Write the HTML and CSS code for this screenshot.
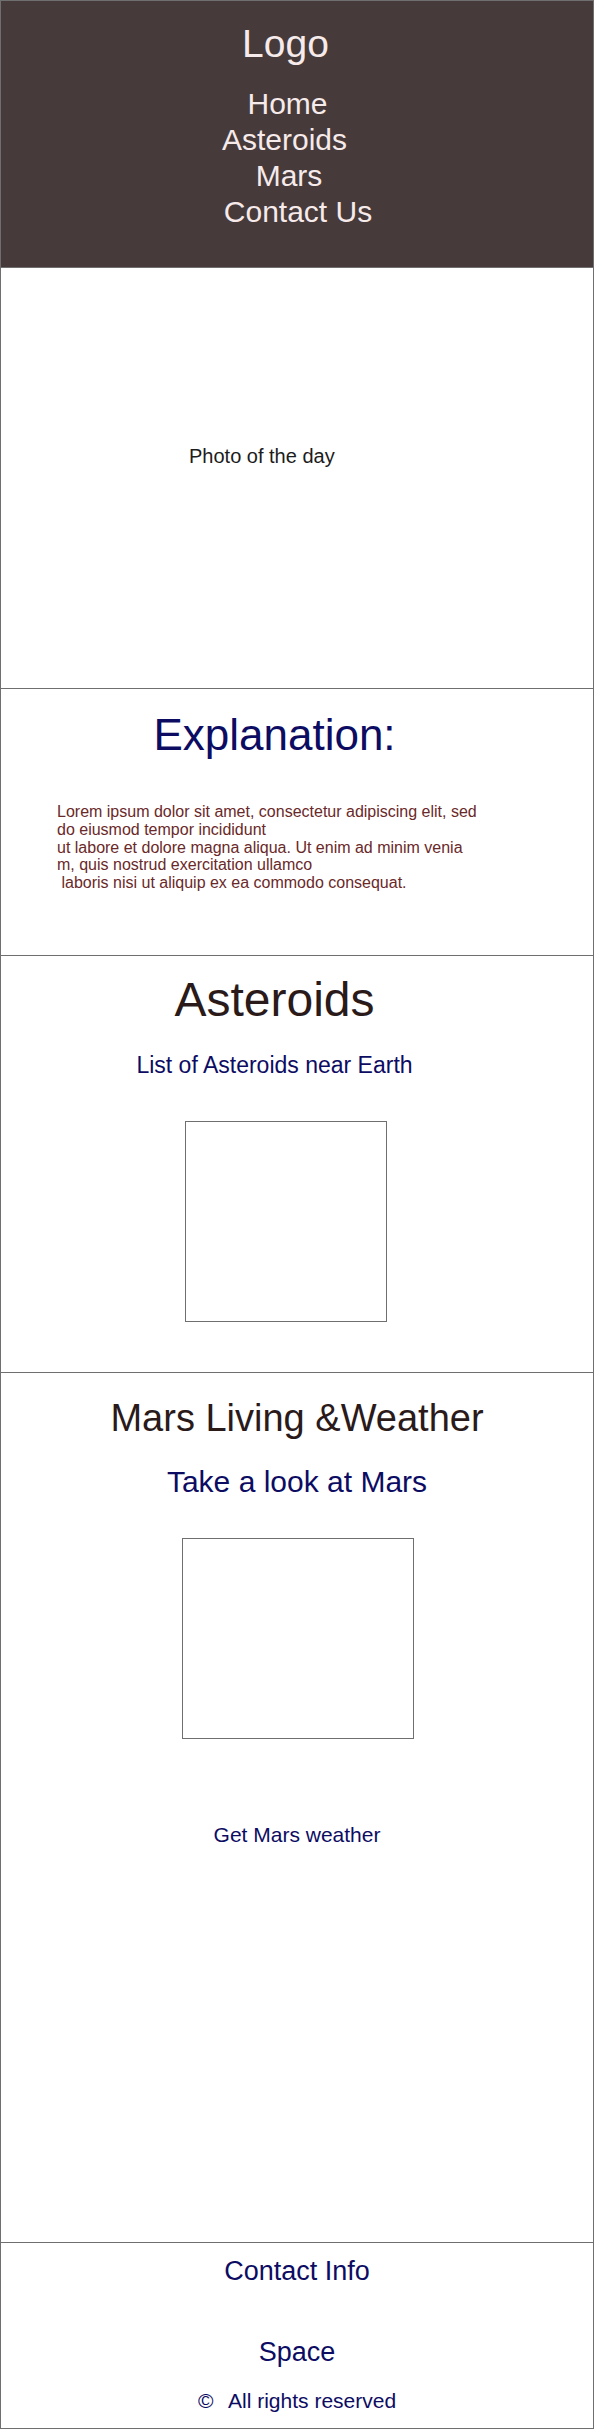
FILE: index.html
```html
<!DOCTYPE html>
<html lang="en">
<head>
<meta charset="utf-8">
<title>Space</title>
<link rel="stylesheet" href="styles.css">
</head>
<body>
<div class="page">
  <header class="site-header">
    <div class="logo">Logo</div>
    <nav class="nav">
      <a class="nav-link nav-home" href="#">Home</a>
      <a class="nav-link nav-asteroids" href="#">Asteroids</a>
      <a class="nav-link nav-mars" href="#">Mars</a>
      <a class="nav-link nav-contact" href="#">Contact Us</a>
    </nav>
  </header>

  <section class="photo">
    <p class="photo-label">Photo of the day</p>
  </section>

  <section class="explanation">
    <h2 class="explanation-title">Explanation:</h2>
    <p class="explanation-text">Lorem ipsum dolor sit amet, consectetur adipiscing elit, sed<br>do eiusmod tempor incididunt<br>ut labore et dolore magna aliqua. Ut enim ad minim venia<br>m, quis nostrud exercitation ullamco<br>&nbsp;laboris nisi ut aliquip ex ea commodo consequat.</p>
  </section>

  <section class="asteroids">
    <h2 class="asteroids-title">Asteroids</h2>
    <p class="asteroids-sub">List of Asteroids near Earth</p>
    <div class="asteroids-box"></div>
  </section>

  <section class="mars">
    <h2 class="mars-title">Mars Living &amp;Weather</h2>
    <p class="mars-sub">Take a look at Mars</p>
    <div class="mars-box"></div>
    <p class="mars-weather">Get Mars weather</p>
  </section>

  <footer class="site-footer">
    <p class="footer-contact">Contact Info</p>
    <p class="footer-space">Space</p>
    <p class="footer-rights"><span class="copy">&copy;</span> All rights reserved</p>
  </footer>
</div>
</body>
</html>
```

FILE: styles.css
```css
* {
  box-sizing: border-box;
}

html, body {
  margin: 0;
  padding: 0;
  background: #ffffff;
}

body {
  font-family: "Liberation Sans", Arial, Helvetica, sans-serif;
}

p, h2 {
  margin: 0;
  font-weight: normal;
}

.page {
  width: 594px;
  border: 1px solid #6f6f6f;
  display: flex;
  flex-direction: column;
}

/* Header */
.site-header {
  background: #463a3a;
  border-bottom: 1px solid #6f6f6f;
  height: 267px;
  padding-top: 19px;
  display: flex;
  flex-direction: column;
  align-items: center;
}

.logo {
  color: #f6eaea;
  font-size: 39px;
  line-height: 48px;
  margin-right: 23px;
}

.nav {
  margin-top: 18px;
  display: flex;
  flex-direction: column;
  align-items: center;
}

.nav-link {
  color: #f6eaea;
  text-decoration: none;
  font-size: 30px;
  line-height: 36px;
}

.nav-home { margin-right: 19px; }
.nav-asteroids { margin-right: 25px; }
.nav-mars { margin-right: 16px; }
.nav-contact { margin-left: 2px; }

/* Photo */
.photo {
  height: 421px;
  border-bottom: 1px solid #6f6f6f;
  padding-top: 176px;
  padding-left: 188px;
}

.photo-label {
  color: #1c1c1c;
  font-size: 20px;
  line-height: 24px;
}

/* Explanation */
.explanation {
  height: 267px;
  border-bottom: 1px solid #6f6f6f;
  padding-top: 20px;
}

.explanation-title {
  color: #0d0c63;
  font-size: 44px;
  line-height: 52px;
  text-align: center;
  padding-right: 45px;
}

.explanation-text {
  margin-top: 42px;
  padding-left: 56px;
  color: #6a2929;
  font-size: 16px;
  line-height: 17.8px;
}

/* Asteroids */
.asteroids {
  height: 417px;
  border-bottom: 1px solid #6f6f6f;
  padding-top: 16px;
  padding-right: 45px;
  display: flex;
  flex-direction: column;
  align-items: center;
}

.asteroids-title {
  color: #2a1a1a;
  font-size: 48px;
  line-height: 56px;
}

.asteroids-sub {
  margin-top: 23px;
  color: #0d0c63;
  font-size: 23px;
  line-height: 28px;
}

.asteroids-box {
  margin-top: 42px;
  margin-left: 22px;
  width: 202px;
  height: 201px;
  border: 1px solid #6f6f6f;
}

/* Mars */
.mars {
  height: 870px;
  border-bottom: 1px solid #6f6f6f;
  padding-top: 23px;
  display: flex;
  flex-direction: column;
  align-items: center;
}

.mars-title {
  color: #2a1a1a;
  font-size: 38px;
  line-height: 44px;
}

.mars-sub {
  margin-top: 24px;
  color: #0d0c63;
  font-size: 30px;
  line-height: 36px;
}

.mars-box {
  margin-top: 38px;
  margin-left: 1px;
  width: 232px;
  height: 201px;
  border: 1px solid #6f6f6f;
}

.mars-weather {
  margin-top: 84px;
  color: #0d0c63;
  font-size: 21px;
  line-height: 24px;
}

/* Footer */
.site-footer {
  height: 185px;
  padding-top: 12px;
  display: flex;
  flex-direction: column;
  align-items: center;
  color: #0d0c63;
}

.footer-contact {
  font-size: 27px;
  line-height: 32px;
}

.footer-space {
  margin-top: 49px;
  font-size: 27px;
  line-height: 32px;
}

.footer-rights {
  margin-top: 21px;
  font-size: 21px;
  line-height: 24px;
}

.copy {
  margin-right: 10px;
}
```
